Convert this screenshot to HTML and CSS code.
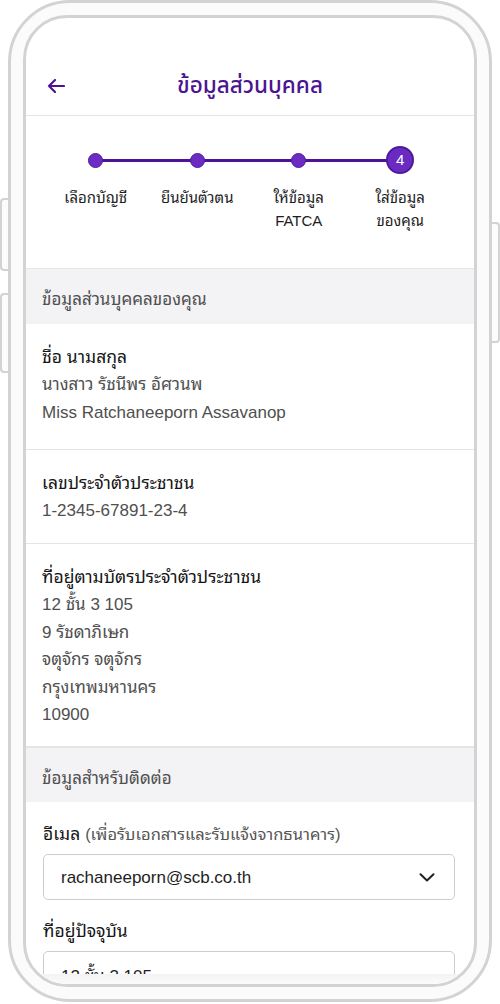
FILE: index.html
```html
<!DOCTYPE html>
<html lang="th">
<head>
<meta charset="utf-8">
<title>ข้อมูลส่วนบุคคล</title>
<link rel="stylesheet" href="styles.css">
</head>
<body>
<div class="stage">
  <span class="side-btn side-l1"></span>
  <span class="side-btn side-l2"></span>
  <span class="side-btn side-r"></span>
  <div class="device">
    <div class="screen">
      <header class="topbar">
        <div class="topbar-left">
          <svg class="back" width="18" height="14" viewBox="0 0 18 14" aria-hidden="true">
            <path d="M17 7H2M8 1L2 7l6 6" fill="none" stroke="currentColor" stroke-width="2.2" stroke-linecap="round" stroke-linejoin="round"/>
          </svg>
        </div>
        <h1 class="title">ข้อมูลส่วนบุคคล</h1>
        <div></div>
      </header>

      <section class="stepper">
        <div class="steps">
          <div class="step"><span class="dot"></span><span class="step-label">เลือกบัญชี</span></div>
          <div class="step"><span class="dot"></span><span class="step-label">ยืนยันตัวตน</span></div>
          <div class="step"><span class="dot"></span><span class="step-label">ให้ข้อมูล<br>FATCA</span></div>
          <div class="step"><span class="dot dot-current">4</span><span class="step-label">ใส่ข้อมูล<br>ของคุณ</span></div>
        </div>
      </section>

      <div class="group-head">ข้อมูลส่วนบุคคลของคุณ</div>

      <div class="info">
        <div class="info-label">ชื่อ นามสกุล</div>
        <div class="info-value">นางสาว รัชนีพร อัศวนพ</div>
        <div class="info-value">Miss Ratchaneeporn Assavanop</div>
      </div>

      <div class="info info-id">
        <div class="info-label">เลขประจำตัวประชาชน</div>
        <div class="info-value">1-2345-67891-23-4</div>
      </div>

      <div class="info info-address">
        <div class="info-label">ที่อยู่ตามบัตรประจำตัวประชาชน</div>
        <div class="info-value">12 ชั้น 3 105</div>
        <div class="info-value">9 รัชดาภิเษก</div>
        <div class="info-value">จตุจักร จตุจักร</div>
        <div class="info-value">กรุงเทพมหานคร</div>
        <div class="info-value">10900</div>
      </div>

      <div class="group-head group-head-bordered">ข้อมูลสำหรับติดต่อ</div>

      <div class="form">
        <label class="field-label">อีเมล <span class="field-hint">(เพื่อรับเอกสารและรับแจ้งจากธนาคาร)</span></label>
        <div class="select">
          <span class="select-text">rachaneeporn@scb.co.th</span>
          <svg class="chevron" width="16" height="9" viewBox="0 0 16 9" aria-hidden="true">
            <path d="M1.5 1.2L8 7.5l6.5-6.3" fill="none" stroke="#222" stroke-width="2" stroke-linecap="round" stroke-linejoin="round"/>
          </svg>
        </div>
        <label class="field-label field-label-next">ที่อยู่ปัจจุบัน</label>
        <div class="select">
          <span class="select-text">12 ชั้น 3 105</span>
        </div>
      </div>
      <div class="screen-fade"></div>
    </div>
  </div>
</div>
</body>
</html>
```

FILE: styles.css
```css
* { box-sizing: border-box; }

html, body {
  margin: 0;
  padding: 0;
  background: #ffffff;
}

body {
  font-family: "Liberation Sans", "Noto Sans Thai Looped", "Noto Serif Thai", "Noto Sans Thai", "Noto Sans", sans-serif;
  color: #1e1e1e;
}

.stage {
  position: relative;
  width: 500px;
  height: 1004px;
  padding: 0 8px;
}

.side-btn {
  position: absolute;
  width: 10px;
  border: 2px solid #d3d3d3;
  background: #fcfcfc;
}

.side-l1 { left: 0; top: 198px; height: 73px; border-right: none; border-radius: 4px 0 0 4px; }
.side-l2 { left: 0; top: 293px; height: 80px; border-right: none; border-radius: 4px 0 0 4px; }
.side-r  { right: 0; top: 222px; height: 121px; border-left: none; border-radius: 0 4px 4px 0; }

.device {
  position: relative;
  height: 1002px;
  border: 3px solid #d3d3d3;
  border-radius: 62px;
  padding: 12px;
  background: #fbfbfb;
}

.screen {
  position: relative;
  height: 100%;
  border: 3px solid #d3d3d3;
  border-radius: 44px;
  background: #ffffff;
  overflow: hidden;
}

/* header */
.topbar {
  display: grid;
  grid-template-columns: 1fr auto 1fr;
  align-items: center;
  height: 98px;
  padding-top: 39px;
  border-bottom: 1px solid #e4e4e4;
}

.topbar-left {
  padding-left: 21px;
  display: flex;
  align-items: center;
  color: #4b1592;
}

.back { display: block; }

.title {
  margin: 0;
  font-family: "Noto Sans Thai", "Liberation Sans", sans-serif;
  font-size: 22.5px;
  font-weight: 500;
  line-height: 30px;
  color: #4b1592;
}

/* stepper */
.stepper {
  padding: 30px 0 36px 19px;
  border-bottom: 1px solid #e6e6e6;
}

.steps {
  position: relative;
  width: 406px;
  display: grid;
  grid-template-columns: repeat(4, 101.5px);
  align-items: start;
}

.steps::before {
  content: "";
  position: absolute;
  left: 50.75px;
  right: 50.75px;
  top: 13px;
  height: 2.5px;
  background: #4e1294;
}

.step {
  position: relative;
  display: flex;
  flex-direction: column;
  align-items: center;
}

.dot {
  position: relative;
  width: 15px;
  height: 15px;
  margin: 6.5px 0;
  border-radius: 50%;
  background: #6c2cc4;
  border: 1.5px solid #52199d;
}

.dot-current {
  width: 28px;
  height: 28px;
  margin: 0;
  border-width: 2px;
  background: #6a2bc2;
  color: #ffffff;
  font-size: 15px;
  line-height: 24px;
  text-align: center;
}

.step-label {
  margin-top: 12px;
  font-size: 15px;
  line-height: 23px;
  text-align: center;
  color: #1e1e1e;
}

/* group headers */
.group-head {
  height: 55px;
  padding: 17px 16px 10px;
  background: #f3f2f5;
  font-size: 17px;
  line-height: 28px;
  color: #505050;
}

.group-head-bordered {
  border-top: 1px solid #e4e4e4;
}

/* info blocks */
.info {
  padding: 19px 16px 22px;
  border-bottom: 1px solid #e4e4e4;
}

.info-id { padding-bottom: 18px; }

.info-address { padding-bottom: 17px; }
.info-address .info-value { line-height: 27.6px; }

.info-label {
  font-size: 17.5px;
  line-height: 28px;
  color: #151515;
}

.info-value {
  font-size: 17px;
  line-height: 28px;
  color: #4f4f4f;
}

/* form */
.form {
  padding: 18px 19px 0 17px;
}

.field-label {
  display: block;
  font-size: 17.5px;
  line-height: 28px;
  color: #151515;
}

.field-hint {
  font-size: 16.5px;
  color: #555555;
}

.field-label-next { margin-top: 17px; }

.select {
  display: flex;
  align-items: center;
  justify-content: space-between;
  height: 46px;
  margin-top: 6px;
  padding: 2px 19px 0 17px;
  border: 1px solid #cccccc;
  border-radius: 5px;
  background: #ffffff;
}

.select-text {
  font-size: 17px;
  color: #1e1e1e;
}

.chevron { display: block; }

.screen-fade {
  position: absolute;
  left: 0;
  right: 0;
  bottom: 0;
  height: 10px;
  background: linear-gradient(#f3f3f3, #fbfbfb);
}
```
